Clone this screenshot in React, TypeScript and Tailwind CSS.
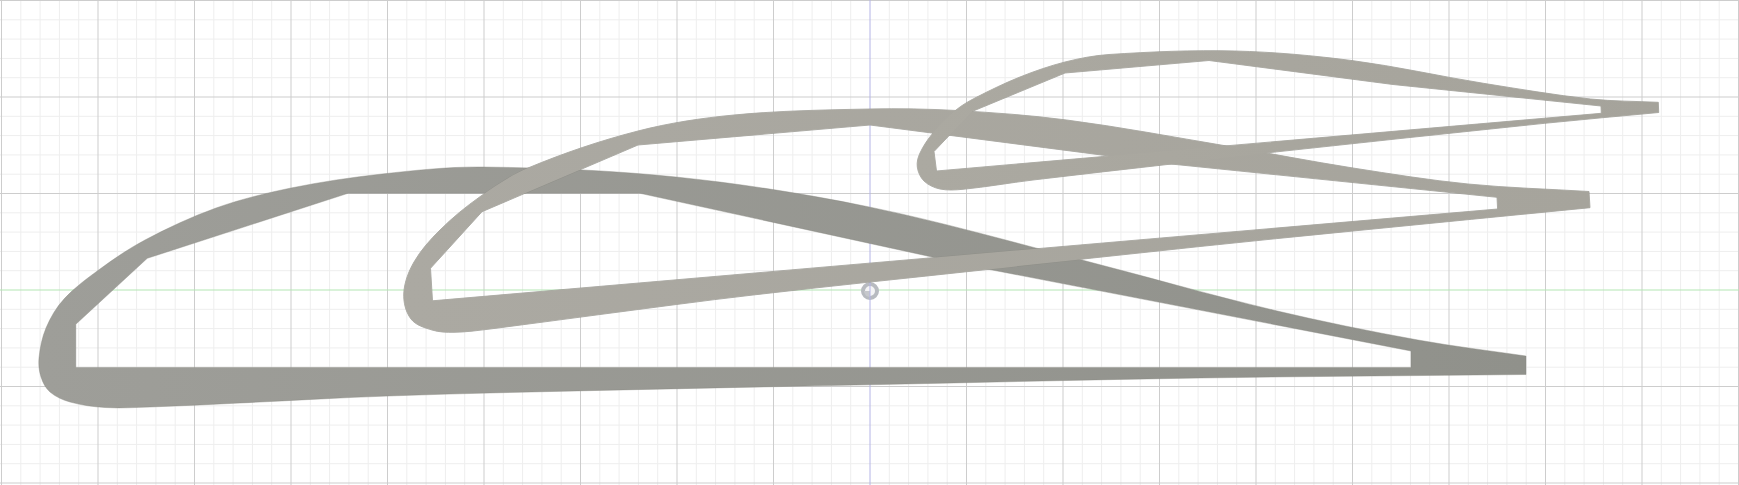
type P = [number, number];

function smooth(pts: P[]): string {
  const dist = (a: P, b: P) => Math.hypot(a[0] - b[0], a[1] - b[1]);
  const tangents: P[] = pts.map((p, i) => {
    const a = pts[Math.max(i - 1, 0)];
    const b = pts[Math.min(i + 1, pts.length - 1)];
    const d = dist(a, b) || 1;
    return [(b[0] - a[0]) / d, (b[1] - a[1]) / d];
  });
  let d = `M${pts[0][0]} ${pts[0][1]}`;
  for (let i = 0; i < pts.length - 1; i++) {
    const p1 = pts[i];
    const p2 = pts[i + 1];
    const h = dist(p1, p2) / 3;
    const c1x = p1[0] + tangents[i][0] * h;
    const c1y = p1[1] + tangents[i][1] * h;
    const c2x = p2[0] - tangents[i + 1][0] * h;
    const c2y = p2[1] - tangents[i + 1][1] * h;
    d += `C${c1x.toFixed(1)} ${c1y.toFixed(1)} ${c2x.toFixed(1)} ${c2y.toFixed(1)} ${p2[0]} ${p2[1]}`;
  }
  return d + "Z";
}

function poly(pts: P[]): string {
  return "M" + pts.map((p) => `${p[0]} ${p[1]}`).join("L") + "Z";
}

const dark = smooth([
  [1526, 356], [1418, 340], [1273, 310], [1082, 260], [868, 206.7], [676, 177], [482, 167], [382, 174], [291, 188], [216, 208], [145, 240],
  [100, 269], [64, 299], [46, 328], [39, 358], [41, 377], [50, 392], [70, 402], [105, 407.5], [150, 407], [240, 403], [388, 396], [600, 390.4], [868, 384.8], [1200, 378], [1526, 374.5],
]);
const darkHole = poly([
  [75.8, 324.3], [147.3, 258.3], [348, 193.3], [640, 193.3], [987, 269], [1411, 351], [1411, 367.4], [75.8, 367.4],
]);

const mid = smooth([
  [1589, 191.5], [1468, 184], [1353, 168], [1226.7, 146], [1066.7, 120], [956.7, 110.5], [870, 109], [734, 115], [638, 131],
  [528, 168], [480, 196.7], [440, 230], [414, 262], [403.8, 293], [411, 319], [432, 330], [454, 332.3], [490, 329], [600, 314.5], [753, 295], [982.7, 270],
  [1200, 246.5], [1353, 231], [1590, 207.7],
]);
const midHole = poly([
  [430.5, 268.3], [482, 211.7], [638, 145], [870, 125], [1171, 164], [1497, 197.3], [1497.6, 209], [432.5, 300.8],
]);

const top = smooth([
  [1658.3, 102.3], [1590.6, 99], [1483.4, 83.3], [1353, 60.7], [1234.7, 51], [1109, 54.5], [1065, 62], [1020, 77], [976, 97.5], [956, 110], [933, 133],
  [920, 153], [917.3, 167], [924, 181], [940, 189], [963, 189.3], [1033, 180], [1171.7, 164], [1269, 152.7], [1544.7, 123.3], [1658.7, 112.5],
]);
const topHole = poly([
  [934, 151.5], [972, 111.5], [1065, 73], [1209, 60.5], [1393, 84.5], [1601, 106], [1601.3, 113.3], [936.5, 171],
]);

const W = 1739;
const H = 485;
const CX = 870;
const CY = 290;
const STEP = 96.5;
const MINOR = STEP / 5;

const vMinor: number[] = [];
const vMajor: number[] = [];
for (let k = -45; k <= 45; k++) {
  const x = CX + k * MINOR;
  if (x < 0 || x > W || k === 0) continue;
  (k % 5 === 0 ? vMajor : vMinor).push(x);
}
const hMinor: number[] = [];
const hMajor: number[] = [];
for (let k = -15; k <= 15; k++) {
  const y = CY + k * MINOR;
  if (y < 0 || y > H || k === 0) continue;
  (k % 5 === 0 ? hMajor : hMinor).push(y);
}

export default function App() {
  return (
    <div className="w-[1739px] h-[485px] bg-white overflow-hidden">
      <svg width={W} height={H} viewBox={`0 0 ${W} ${H}`} className="block">
        <defs>
          <linearGradient id="darkFill" gradientUnits="userSpaceOnUse" x1="40" y1="0" x2="1526" y2="0">
            <stop offset="0" stopColor="#9e9e99" />
            <stop offset="1" stopColor="#90918b" />
          </linearGradient>
          <linearGradient id="midFill" gradientUnits="userSpaceOnUse" x1="404" y1="0" x2="1590" y2="0">
            <stop offset="0" stopColor="#aba9a2" />
            <stop offset="1" stopColor="#a6a49c" />
          </linearGradient>
          <linearGradient id="topFill" gradientUnits="userSpaceOnUse" x1="917" y1="0" x2="1659" y2="0">
            <stop offset="0" stopColor="#aba9a1" />
            <stop offset="1" stopColor="#a5a39b" />
          </linearGradient>
        </defs>
        {vMinor.map((x) => (
          <line key={`vm${x}`} x1={x} y1={0} x2={x} y2={H} stroke="#eeeeee" strokeWidth={1} />
        ))}
        {hMinor.map((y) => (
          <line key={`hm${y}`} x1={0} y1={y} x2={W} y2={y} stroke="#eeeeee" strokeWidth={1} />
        ))}
        {vMajor.map((x) => (
          <line key={`vM${x}`} x1={x} y1={0} x2={x} y2={H} stroke="#cdcdcd" strokeWidth={1} />
        ))}
        {hMajor.map((y) => (
          <line key={`hM${y}`} x1={0} y1={y} x2={W} y2={y} stroke="#cdcdcd" strokeWidth={1} />
        ))}
        <line x1={0} y1={CY} x2={W} y2={CY} stroke="#b3e6b3" strokeWidth={1} />
        <circle cx={CX} cy={CY + 1} r={7} fill="#f4f4f5" stroke="#b8bbc0" strokeWidth={4} />
        <path d={`M${CX - 6} ${CY + 1}A6 6 0 0 0 ${CX} ${CY + 7}L${CX} ${CY + 1}Z`} fill="#c6c8cc" />
        <line x1={CX} y1={0} x2={CX} y2={H} stroke="#b4b4e6" strokeWidth={1} />
        <path d={dark + darkHole} fill="url(#darkFill)" fillRule="evenodd" stroke="#85857f" strokeWidth={0.4} />
        <path d={mid + midHole} fill="none" stroke="#8d8c85" strokeWidth={0.7} />
        <path d={top + topHole} fill="none" stroke="#8d8c85" strokeWidth={0.7} />
        <path d={mid + midHole} fill="url(#midFill)" fillRule="evenodd" />
        <path d={top + topHole} fill="url(#topFill)" fillRule="evenodd" />
      </svg>
    </div>
  );
}
